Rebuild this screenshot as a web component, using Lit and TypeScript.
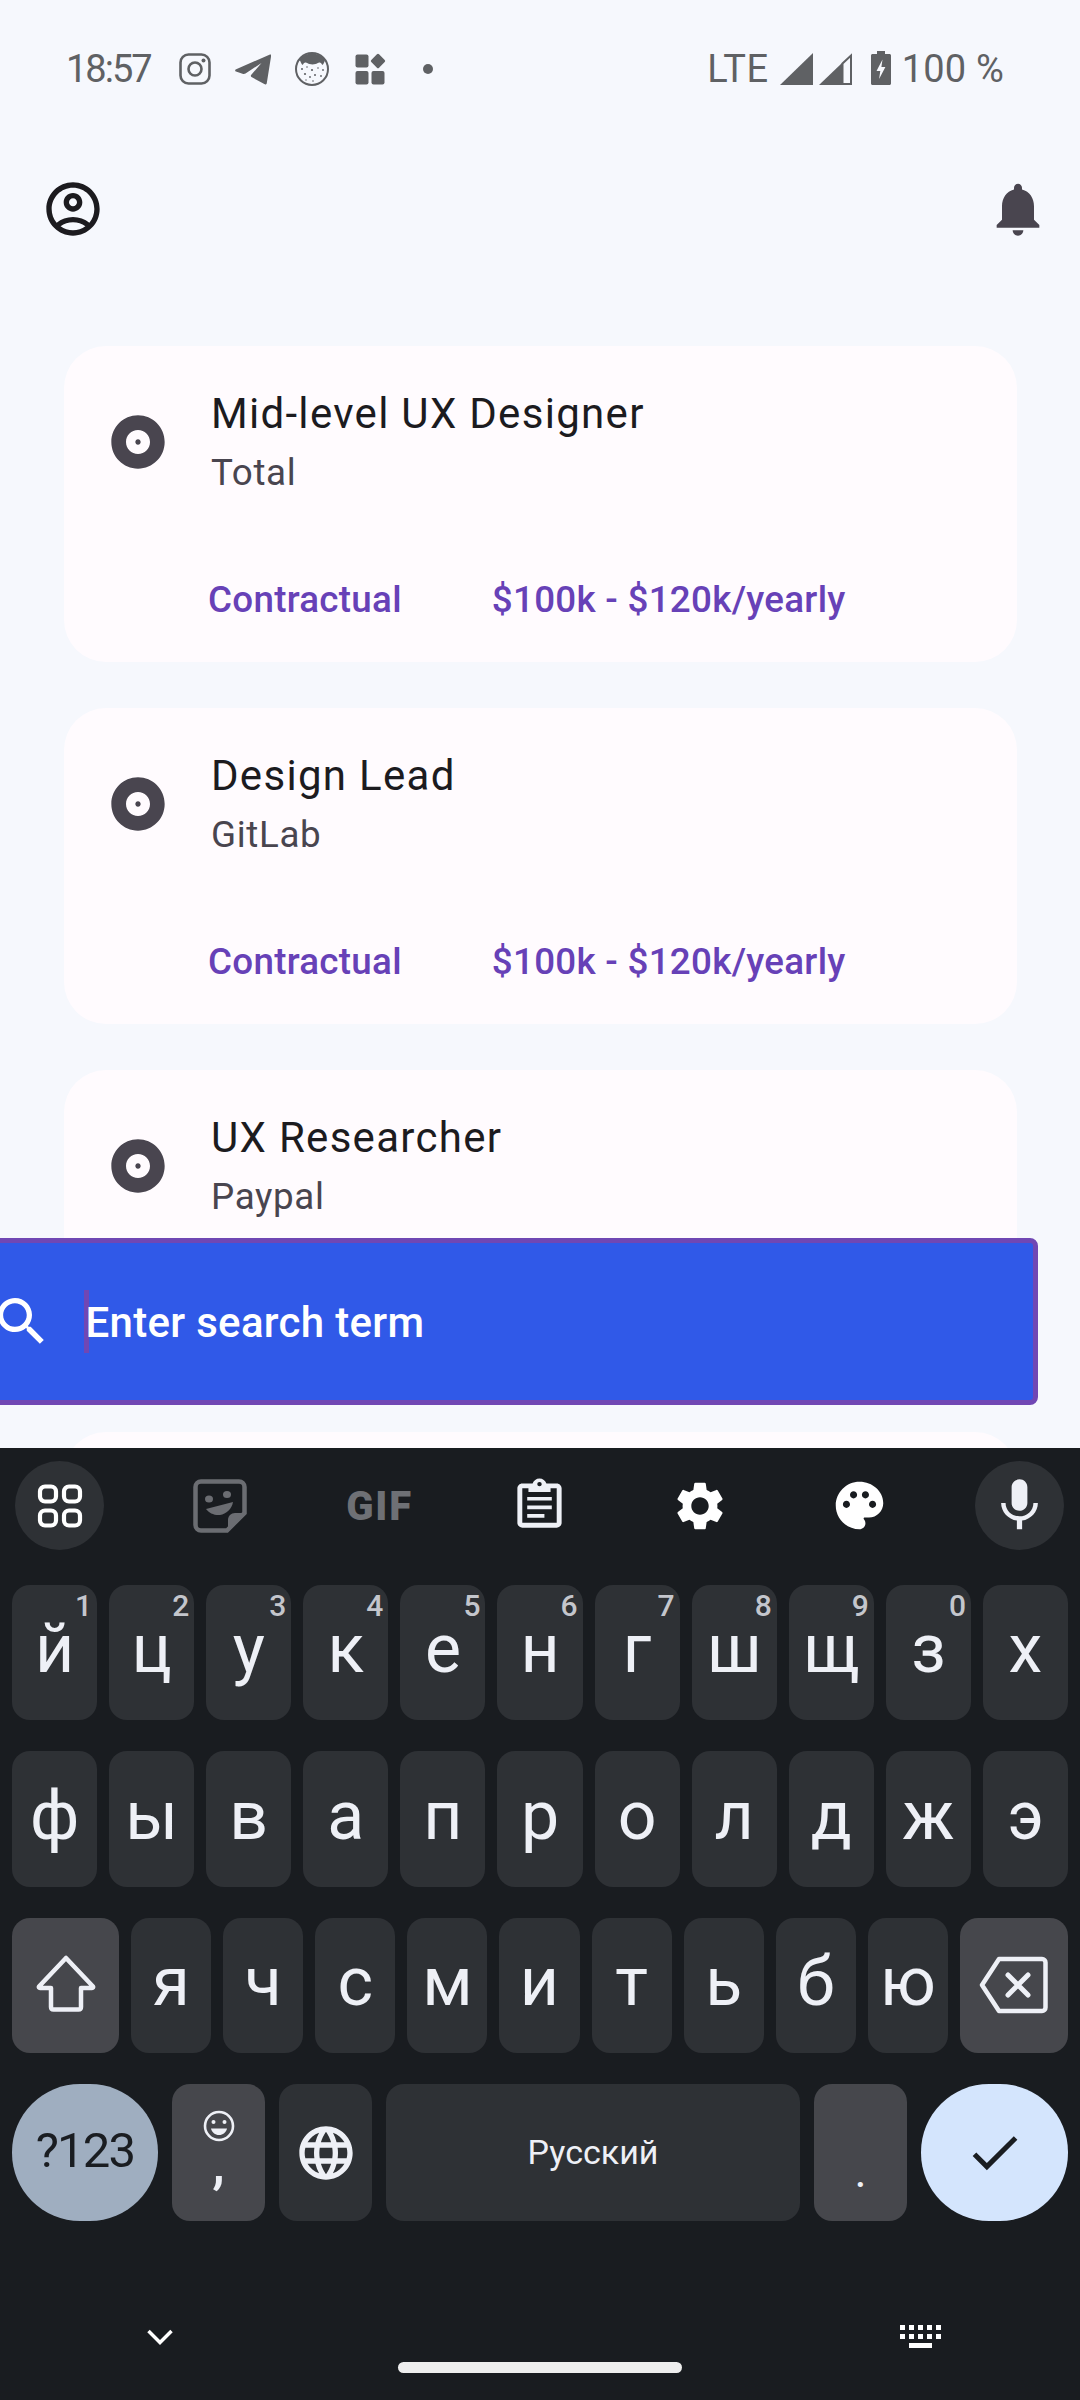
import { LitElement, html, css } from "lit";
import { customElement } from "lit/decorators.js";

const P = {
  account: "M12 2C6.48 2 2 6.48 2 12s4.48 10 10 10 10-4.48 10-10S17.52 2 12 2zM7.35 18.5C8.66 17.56 10.26 17 12 17s3.34.56 4.65 1.5c-1.31.94-2.91 1.5-4.65 1.5s-3.34-.56-4.65-1.5zm10.79-1.38C16.45 15.8 14.32 15 12 15s-4.45.8-6.14 2.12C4.7 15.73 4 13.95 4 12c0-4.42 3.58-8 8-8s8 3.58 8 8c0 1.95-.7 3.73-1.86 5.12zM12 6c-1.93 0-3.5 1.57-3.5 3.5S10.07 13 12 13s3.5-1.57 3.5-3.5S13.93 6 12 6zm0 5c-.83 0-1.5-.67-1.5-1.5S11.17 8 12 8s1.5.67 1.5 1.5S12.83 11 12 11z",
  bell: "M12 22c1.1 0 2-.9 2-2h-4c0 1.1.9 2 2 2zm6-6v-5c0-3.07-1.63-5.64-4.5-6.32V4c0-.83-.67-1.5-1.5-1.5s-1.5.67-1.5 1.5v.68C7.64 5.36 6 7.92 6 11v5l-2 2v1h16v-1l-2-2z",
  album: "M12 2C6.48 2 2 6.48 2 12s4.48 10 10 10 10-4.48 10-10S17.52 2 12 2zm0 14.5c-2.49 0-4.5-2.01-4.5-4.5S9.51 7.5 12 7.5s4.5 2.01 4.5 4.5-2.01 4.5-4.5 4.5zm0-5.5c-.55 0-1 .45-1 1s.45 1 1 1 1-.45 1-1-.45-1-1-1z",
  search: "M15.5 14h-.79l-.28-.27C15.41 12.59 16 11.11 16 9.5 16 5.91 13.09 3 9.5 3S3 5.91 3 9.5 5.91 16 9.5 16c1.61 0 3.09-.59 4.23-1.57l.27.28v.79l5 4.99L20.49 19l-4.99-5zm-6 0C7.01 14 5 11.99 5 9.5S7.01 5 9.5 5 14 7.01 14 9.5 11.99 14 9.5 14z",
  mic: "M12 14c1.66 0 3-1.34 3-3V5c0-1.66-1.34-3-3-3S9 3.34 9 5v6c0 1.66 1.34 3 3 3zm5.3-3c0 3-2.54 5.1-5.3 5.1S6.7 14 6.7 11H5c0 3.41 2.72 6.23 6 6.72V21h2v-3.28c3.28-.48 6-3.3 6-6.72h-1.7z",
  gear: "M19.14 12.94c.04-.3.06-.61.06-.94 0-.32-.02-.64-.07-.94l2.03-1.58c.18-.14.23-.41.12-.61l-1.92-3.32c-.12-.22-.37-.29-.59-.22l-2.39.96c-.5-.38-1.03-.7-1.62-.94l-.36-2.54c-.04-.24-.24-.41-.48-.41h-3.84c-.24 0-.43.17-.47.41l-.36 2.54c-.59.24-1.13.57-1.62.94l-2.39-.96c-.22-.08-.47 0-.59.22L2.74 8.87c-.12.21-.08.47.12.61l2.03 1.58c-.05.3-.09.63-.09.94s.02.64.07.94l-2.03 1.58c-.18.14-.23.41-.12.61l1.92 3.32c.12.22.37.29.59.22l2.39-.96c.5.38 1.03.7 1.62.94l.36 2.54c.05.24.24.41.48.41h3.84c.24 0 .44-.17.47-.41l.36-2.54c.59-.24 1.13-.56 1.62-.94l2.39.96c.22.08.47 0 .59-.22l1.92-3.32c.12-.22.07-.47-.12-.61l-2.01-1.58zM12 15.6c-1.98 0-3.6-1.62-3.6-3.6s1.62-3.6 3.6-3.6 3.6 1.62 3.6 3.6-1.62 3.6-3.6 3.6z",
  palette: "M12 2C6.49 2 2 6.49 2 12s4.49 10 10 10c1.38 0 2.5-1.12 2.5-2.5 0-.61-.23-1.2-.64-1.67-.08-.1-.13-.21-.13-.33 0-.28.22-.5.5-.5H16c3.31 0 6-2.69 6-6 0-4.96-4.49-9-10-9zM6.5 13C5.67 13 5 12.33 5 11.5S5.67 10 6.5 10 8 10.67 8 11.5 7.33 13 6.5 13zm3-4C8.67 9 8 8.33 8 7.5S8.67 6 9.5 6s1.5.67 1.5 1.5S10.33 9 9.5 9zm5 0c-.83 0-1.5-.67-1.5-1.5S13.67 6 14.5 6s1.5.67 1.5 1.5S15.33 9 14.5 9zm3 4c-.83 0-1.5-.67-1.5-1.5s.67-1.5 1.5-1.5 1.5.67 1.5 1.5-.67 1.5-1.5 1.5z",
  globe: "M11.99 2C6.47 2 2 6.48 2 12s4.47 10 9.99 10C17.52 22 22 17.52 22 12S17.52 2 11.99 2zm6.93 6h-2.95c-.32-1.25-.78-2.45-1.38-3.56 1.84.63 3.37 1.91 4.33 3.56zM12 4.04c.83 1.2 1.48 2.53 1.91 3.96h-3.82c.43-1.43 1.08-2.76 1.91-3.96zM4.26 14C4.1 13.36 4 12.69 4 12s.1-1.36.26-2h3.38c-.08.66-.14 1.32-.14 2 0 .68.06 1.34.14 2H4.26zm.82 2h2.95c.32 1.25.78 2.45 1.38 3.56-1.84-.63-3.37-1.9-4.33-3.56zm2.95-8H5.08c.96-1.66 2.49-2.93 4.33-3.56C8.81 5.55 8.35 6.75 8.03 8zM12 19.96c-.83-1.2-1.48-2.53-1.91-3.96h3.82c-.43 1.43-1.08 2.76-1.91 3.96zM14.34 14H9.66c-.09-.66-.16-1.32-.16-2 0-.68.07-1.35.16-2h4.68c.09.65.16 1.32.16 2 0 .68-.07 1.34-.16 2zm.25 5.56c.6-1.11 1.06-2.31 1.38-3.56h2.95c-.96 1.65-2.49 2.93-4.33 3.56zM16.36 14c.08-.66.14-1.32.14-2 0-.68-.06-1.34-.14-2h3.38c.16.64.26 1.31.26 2s-.1 1.36-.26 2h-3.38z",
  check: "M9 16.17L4.83 12l-1.42 1.41L9 19 21 7l-1.41-1.41z",
  clip: "M19 3h-4.18C14.4 1.84 13.3 1 12 1s-2.4.84-2.82 2H5c-1.1 0-2 .9-2 2v14c0 1.1.9 2 2 2h14c1.1 0 2-.9 2-2V5c0-1.1-.9-2-2-2zm-7-.25c.41 0 .75.34.75.75s-.34.75-.75.75-.75-.34-.75-.75.34-.75.75-.75zM19 19H5V5h14v14z",
};

const icon = (d: string, cls: string) =>
  html`<svg class=${cls} viewBox="0 0 24 24" fill="currentColor"><path d=${d}></path></svg>`;

interface Job { title: string; company: string; showFooter: boolean; }
const jobs: Job[] = [
  { title: "Mid-level UX Designer", company: "Total", showFooter: true },
  { title: "Design Lead", company: "GitLab", showFooter: true },
  { title: "UX Researcher", company: "Paypal", showFooter: false },
];

const row1 = [["й","1"],["ц","2"],["у","3"],["к","4"],["е","5"],["н","6"],["г","7"],["ш","8"],["щ","9"],["з","0"],["х",""]];
const row2 = "фывапролджэ".split("");
const row3 = "ячсмитьбю".split("");

@customElement("app-root")
export class AppRoot extends LitElement {
  static styles = css`
    :host { display: block; width: 1080px; height: 2400px; }
    * { box-sizing: border-box; }
    svg { display: block; flex: none; }
    .page { position: relative; width: 1080px; height: 2400px; overflow: hidden; background: #f6f8fd; font-family: Roboto, sans-serif; }

    .status { height: 138px; display: flex; align-items: center; justify-content: space-between; padding: 0 76px 0 66px; color: #5f6164; }
    .s-left, .s-right { display: flex; align-items: center; }
    .s-text { font-family: Roboto, sans-serif; font-size: 38px; line-height: 40px; }
    .s-left .s-text { margin-right: 28px; letter-spacing: -2px; }
    .s-ig { width: 32px; height: 32px; margin-right: 24px; }
    .s-tg { width: 36px; height: 32px; margin-right: 24px; }
    .s-cat { width: 34px; height: 34px; margin-right: 26px; }
    .s-apps { width: 32px; height: 32px; margin-right: 36px; }
    .s-dot { width: 10px; height: 10px; border-radius: 50%; background: #5f6164; }
    .s-lte { margin-right: 11px; letter-spacing: 0.6px; }
    .s-sig { width: 33px; height: 32px; }
    .s-sig2 { margin-left: 6px; margin-right: 19px; }
    .s-bat { width: 20px; height: 34px; margin-right: 11px; margin-top: -2px; }
    .s-pct { letter-spacing: 0.2px; }

    .appbar { height: 142px; display: flex; align-items: center; justify-content: space-between; padding: 0 30px 0 41px; color: #49454f; }
    .i64 { width: 64px; height: 64px; }
    .profile { color: #1c1b1f; }

    .list { display: flex; flex-direction: column; gap: 46px; padding: 66px 63px 0 64px; }
    .card { height: 316px; background: #fffbfe; border-radius: 42px; padding: 40px 41px 0; }
    .head { display: flex; align-items: center; gap: 42px; color: #49454f; }
    .disc { margin-left: 1px; margin-right: -1px; }
    .title { font-size: 42px; line-height: 56px; letter-spacing: 1.3px; color: #1c1b1f; }
    .sub { font-size: 36.75px; line-height: 52px; letter-spacing: 0.65px; margin-top: 4.5px; color: #49454f; }
    .foot { display: flex; gap: 90px; padding: 75.5px 0 0 103px; font-size: 36.75px; line-height: 52px; font-weight: 500; letter-spacing: 0.28px; color: #6741b7; }

    .searchbar { position: absolute; left: -8px; top: 1238px; width: 1046px; height: 167px; background: #3059e8; border: 5px solid #7047b4; border-radius: 8px; display: flex; align-items: center; color: #fff; }
    .s-icon { width: 63px; height: 63px; margin-left: -7px; }
    .cursor { width: 5px; height: 63px; background: #7047b4; margin-left: 31px; }
    .hint { font-size: 42px; line-height: 56px; font-weight: 500; margin-left: -3.5px; letter-spacing: 0.3px; padding-top: 3px; }

    .kb { position: absolute; left: 0; right: 0; top: 1448px; bottom: 0; background: #191c20; color: #eef0f6; }
    .tools { display: flex; justify-content: space-between; align-items: center; padding: 13px 16px 0 15px; }
    .tool { width: 89px; height: 89px; display: flex; align-items: center; justify-content: center; color: #fff; }
    .round { border-radius: 50%; background: #2e3135; }
    .grid4 { width: 50px; height: 50px; }
    .stk { width: 56px; height: 56px; color: #6b6d72; }
    .gif { font-size: 40px; font-weight: 900; color: #6e7075; letter-spacing: 1.8px; line-height: 40px; padding-top: 2px; }
    .clip { width: 59px; height: 59px; }
    .gear { width: 58px; height: 58px; }
    .pal { width: 57px; height: 57px; }
    .mic { width: 63px; height: 63px; }
    .mic, .clip { color: #eef0f6; }

    .rows { display: flex; flex-direction: column; gap: 31px; padding: 0 12px; margin-top: 35px; }
    .row { display: flex; gap: 12px; height: 135.4px; }
    .row.last { gap: 14px; height: 137px; }
    .key { position: relative; flex: 1 1 0; border-radius: 18px; background: #2e3135; display: flex; align-items: center; justify-content: center; font-size: 68px; line-height: 80px; }
    .key .l { padding-bottom: 7px; line-height: 56px; }
    .num { position: absolute; top: 6px; right: 5px; font-size: 30px; line-height: 30px; font-weight: 500; color: #c4c6cc; }
    .fn { background: #46474c; }
    .shift { flex: 0 0 107px; }
    .back { flex: 0 0 108px; }
    .sym { flex: 0 0 146px; border-radius: 68px; background: #9faec0; color: #1a1d21; font-size: 49px; letter-spacing: -1.8px; padding-bottom: 3px; }
    .comma { flex: 0 0 93px; flex-direction: column; justify-content: flex-start; padding-top: 25px; }
    .emoji { width: 34px; height: 34px; }
    .c-text { font-size: 56px; line-height: 40px; font-weight: 500; }
    .glob { flex: 0 0 93px; }
    .space { flex: 1 1 0; font-size: 34px; line-height: 40px; padding-bottom: 2px; }
    .period { flex: 0 0 93px; align-items: flex-end; font-size: 46px; line-height: 40px; padding-bottom: 30px; }
    .enter { flex: 0 0 147px; border-radius: 68px; background: #d4e5fd; color: #1a1d21; }
    .done { width: 61px; height: 61px; }
    .shift-i { width: 64px; height: 64px; }
    .back-i { width: 70px; height: 58px; }

    .nav { height: 176px; padding-top: 104px; }
    .nav-icons { display: flex; justify-content: space-between; align-items: center; height: 24px; padding: 0 139px 0 147px; color: #fff; }
    .chev { width: 26px; height: 16px; }
    .kbi { width: 41px; height: 24px; }
    .pill { width: 284px; height: 11px; border-radius: 6px; background: #eee; margin: 13px auto 0; }
  `;

  private statusIcons() {
    return html`
      <svg class="s-ig" viewBox="0 0 32 32" fill="none" stroke="currentColor"><rect x="1.5" y="1.5" width="29" height="29" rx="8" stroke-width="2.6"></rect><circle cx="16" cy="16" r="6.5" stroke-width="2.6"></circle><circle cx="24.5" cy="7.5" r="2" fill="currentColor" stroke="none"></circle></svg>
      <svg class="s-tg" viewBox="0 0 36 32" fill="currentColor"><path d="M0.6 16.5 35 1.5c.8-.3 1.4.3 1.2 1.1L31.8 30c-.2 1.5-1.3 1.9-2.5 1.1L16.5 24c-.8-.6-.9-1.5-.2-2.2L26.5 10 10.5 20.5c-1 .6-1.9.6-3 .2L1 18.6c-1-.4-1.1-1.6-.4-2.1z"></path></svg>
      <svg class="s-cat" viewBox="0 0 34 34"><circle cx="17" cy="17" r="16" fill="#f6f8fd" stroke="currentColor" stroke-width="2"></circle><path d="M4 8.5C7 3.5 12 1.5 17 1.5S27 3.5 30 8.5c-1 2-1.5 3.5-2.5 4.5-1-1.5-2-3-3.5-2.5-1.500.5-2 1-3.500 1.500-2 .5-4 .5-6 0-1.500-.5-2-1-3.500-1.500-1.500-.5-2.500 1-3.500 2.500-1-1-1.500-2.500-2.500-4.500z" fill="currentColor"></path><g fill="currentColor"><circle cx="7" cy="17" r="1"></circle><circle cx="12" cy="15" r=".8"></circle><circle cx="17" cy="18" r="1.100"></circle><circle cx="23" cy="16" r=".8"></circle><circle cx="28" cy="18" r=".9"></circle><circle cx="10" cy="22" r="1.100"></circle><circle cx="15" cy="25" r=".9"></circle><circle cx="20" cy="23" r="1"></circle><circle cx="26" cy="24" r=".9"></circle><circle cx="18" cy="29" r=".8"></circle><circle cx="11" cy="28" r=".7"></circle></g></svg>
      <svg class="s-apps" viewBox="0 0 32 32" fill="currentColor"><rect x="0.500" y="1.500" width="13" height="13" rx="2"></rect><rect x="0.500" y="18" width="13" height="13.500" rx="2"></rect><rect x="16.500" y="18" width="13" height="13.500" rx="2"></rect><rect x="17.500" y="2.500" width="11" height="11" rx="1.500" transform="rotate(45 23 8)"></rect></svg>
      <div class="s-dot"></div>`;
  }

  private toolbar() {
    return html`
      <div class="tools">
        <div class="tool round">
          <svg class="grid4" viewBox="0 0 50 50" fill="none" stroke="currentColor" stroke-width="4.200"><rect x="5" y="5.500" width="16" height="15" rx="5"></rect><rect x="29" y="5.500" width="16" height="15" rx="5"></rect><rect x="5" y="29.500" width="16" height="15" rx="5"></rect><rect x="29" y="29.500" width="16" height="15" rx="5"></rect></svg>
        </div>
        <div class="tool">
          <svg class="stk" viewBox="0 0 56 56"><path d="M9 3.500h38c3 0 5.500 2.500 5.500 5.500v26L35 52.500H9c-3 0-5.500-2.500-5.500-5.500V9C3.500 6 6 3.500 9 3.500z" fill="none" stroke="currentColor" stroke-width="4.500"></path><path d="M36 53V42c0-4 3-7 7-7h10z" fill="currentColor"></path><ellipse cx="17" cy="21" rx="4" ry="3.500" fill="currentColor"></ellipse><ellipse cx="35" cy="16.500" rx="4" ry="3.500" fill="currentColor"></ellipse><path d="M14 31l27-7c-1 7-7 12-13 13-6 .5-11-2-14-6z" fill="currentColor"></path></svg>
        </div>
        <div class="tool"><span class="gif">GIF</span></div>
        <div class="tool">
          <svg class="clip" viewBox="0 0 24 24" fill="currentColor"><path d=${P.clip}></path><path fill-rule="evenodd" d="M7.500 3.500h9V6.500h-9z"></path><path d="M7 8.500h10v1.500H7zM7 12h10v1.500H7zM7 15.500h7V17H7z"></path><circle cx="12" cy="3.300" r=".9" fill="#191c20"></circle></svg>
        </div>
        <div class="tool">${icon(P.gear, "gear")}</div>
        <div class="tool">${icon(P.palette, "pal")}</div>
        <div class="tool round">${icon(P.mic, "mic")}</div>
      </div>`;
  }

  private keyboard() {
    return html`
      <div class="rows">
        <div class="row">
          ${row1.map(([k, n]) => html`<div class="key"><span class="l">${k}</span>${n ? html`<span class="num">${n}</span>` : ""}</div>`)}
        </div>
        <div class="row">${row2.map((k) => html`<div class="key"><span class="l">${k}</span></div>`)}</div>
        <div class="row">
          <div class="key fn shift">
            <svg class="shift-i" viewBox="0 0 64 64" fill="none" stroke="currentColor" stroke-width="4.500" stroke-linejoin="round"><path d="M32 5 5 33.500c-.5.800 0 1.500 1 1.500h11v19c0 1.500 1 2.500 2.500 2.500h25c1.500 0 2.500-1 2.500-2.500V35h11c1 0 1.500-.7 1-1.500z"></path></svg>
          </div>
          ${row3.map((k) => html`<div class="key"><span class="l">${k}</span></div>`)}
          <div class="key fn back">
            <svg class="back-i" viewBox="0 0 70 58" fill="none" stroke="currentColor" stroke-width="4.500" stroke-linejoin="round" stroke-linecap="round"><path d="M20 3H63c2 0 3.500 1.500 3.500 3.500v45c0 2-1.500 3.500-3.500 3.500H20L3 29z"></path><path d="M29 19 49 39M49 19 29 39" stroke-width="5"></path></svg>
          </div>
        </div>
        <div class="row last">
          <div class="key sym">?123</div>
          <div class="key fn comma">
            <svg class="emoji" viewBox="0 0 34 34" fill="none" stroke="currentColor" stroke-width="2.600"><circle cx="17" cy="17" r="14"></circle><circle cx="11.500" cy="13" r="2" fill="currentColor" stroke="none"></circle><circle cx="22.500" cy="13" r="2" fill="currentColor" stroke="none"></circle><path d="M9 19.500h16c-1 4-4 6.500-8 6.500s-7-2.500-8-6.500z" fill="currentColor" stroke="none"></path></svg>
            <span class="c-text">,</span>
          </div>
          <div class="key glob">${icon(P.globe, "i64")}</div>
          <div class="key space">Русский</div>
          <div class="key fn period">.</div>
          <div class="key enter">${icon(P.check, "done")}</div>
        </div>
      </div>`;
  }

  render() {
    return html`
      <div class="page">
        <div class="status">
          <div class="s-left"><span class="s-text">18:57</span>${this.statusIcons()}</div>
          <div class="s-right">
            <span class="s-text s-lte">LTE</span>
            <svg class="s-sig" viewBox="0 0 33 32" fill="currentColor"><path d="M33 0v32H0z"></path></svg>
            <svg class="s-sig s-sig2" viewBox="0 0 33 32"><path d="M23 10 0 32h23z" fill="currentColor"></path><path d="M32 2.500V31H23.500V10.500z" fill="none" stroke="currentColor" stroke-width="2"></path></svg>
            <svg class="s-bat" viewBox="0 0 20 34"><path fill="currentColor" d="M6 0h8v3h4.500c.8 0 1.500.7 1.500 1.500V32.500c0 .8-.7 1.500-1.500 1.500H1.500C.7 34 0 33.300 0 32.500V4.500C0 3.700.7 3 1.500 3H6z"></path><path fill="#f6f8fd" d="M11.500 8.500 5.500 20h3.800l-1.200 8 6.300-12h-4z"></path></svg>
            <span class="s-text s-pct">100 %</span>
          </div>
        </div>
        <div class="appbar">
          ${icon(P.account, "i64 profile")}
          ${icon(P.bell, "i64")}
        </div>
        <div class="list">
          ${jobs.map((j) => html`
            <div class="card">
              <div class="head">
                ${icon(P.album, "i64 disc")}
                <div>
                  <div class="title">${j.title}</div>
                  <div class="sub">${j.company}</div>
                </div>
              </div>
              ${j.showFooter ? html`<div class="foot"><span>Contractual</span><span>$100k - $120k/yearly</span></div>` : ""}
            </div>`)}
          <div class="card"></div>
        </div>
        <div class="searchbar">
          ${icon(P.search, "s-icon")}
          <div class="cursor"></div>
          <span class="hint">Enter search term</span>
        </div>
        <div class="kb">
          ${this.toolbar()}
          ${this.keyboard()}
          <div class="nav">
            <div class="nav-icons">
              <svg class="chev" viewBox="0 0 26 16" fill="none" stroke="currentColor" stroke-width="3.500"><path d="M1.500 2 13 13.500 24.500 2"></path></svg>
              <svg class="kbi" viewBox="0 0 41 24" fill="currentColor">
                <rect x="0" y="0" width="5" height="5"></rect><rect x="9" y="0" width="5" height="5"></rect><rect x="18" y="0" width="5" height="5"></rect><rect x="27" y="0" width="5" height="5"></rect><rect x="36" y="0" width="5" height="5"></rect>
                <rect x="0" y="9" width="5" height="5"></rect><rect x="9" y="9" width="5" height="5"></rect><rect x="18" y="9" width="5" height="5"></rect><rect x="27" y="9" width="5" height="5"></rect><rect x="36" y="9" width="5" height="5"></rect>
                <rect x="9" y="18" width="23" height="5"></rect>
              </svg>
            </div>
            <div class="pill"></div>
          </div>
        </div>
      </div>`;
  }
}
